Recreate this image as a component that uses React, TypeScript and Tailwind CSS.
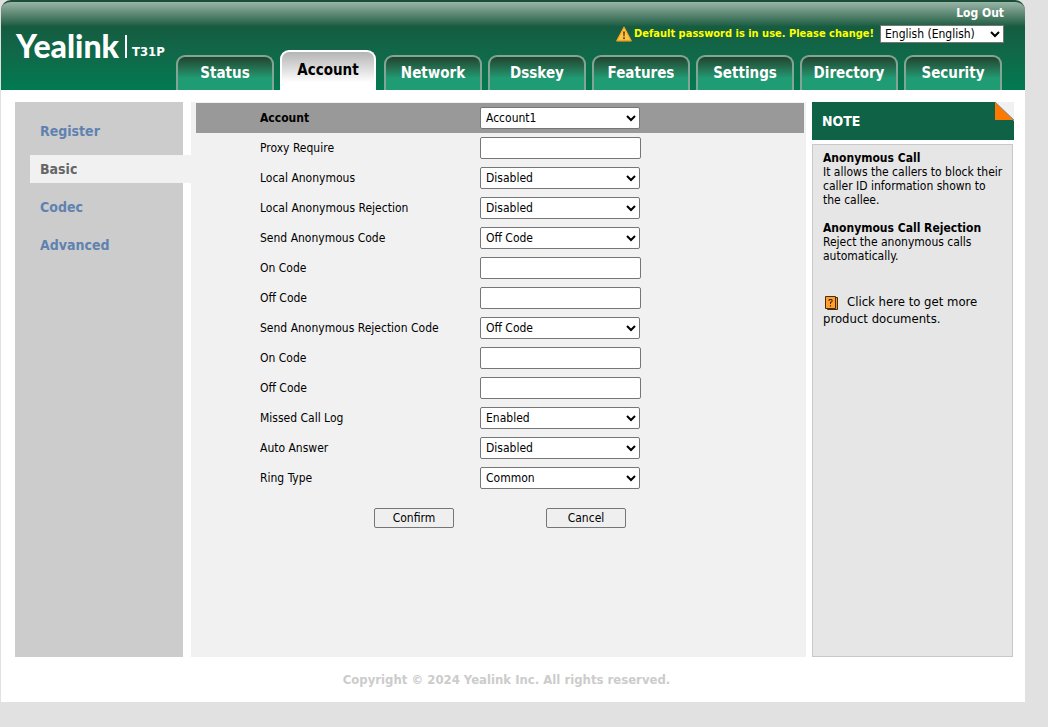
import { useState } from "react";
import type { ReactNode } from "react";

type Field = {
  id: string;
  label: string;
  // fields without options are plain text boxes
  options?: string[];
};

const tabs = ["Status", "Account", "Network", "Dsskey", "Features", "Settings", "Directory", "Security"];

const menu = ["Register", "Basic", "Codec", "Advanced"];

const fields: Field[] = [
  { id: "proxy-require", label: "Proxy Require" },
  { id: "local-anonymous", label: "Local Anonymous", options: ["Disabled", "Enabled"] },
  { id: "local-anonymous-rejection", label: "Local Anonymous Rejection", options: ["Disabled", "Enabled"] },
  { id: "send-anonymous-code", label: "Send Anonymous Code", options: ["Off Code", "On Code"] },
  { id: "anonymous-on-code", label: "On Code" },
  { id: "anonymous-off-code", label: "Off Code" },
  { id: "send-rejection-code", label: "Send Anonymous Rejection Code", options: ["Off Code", "On Code"] },
  { id: "rejection-on-code", label: "On Code" },
  { id: "rejection-off-code", label: "Off Code" },
  { id: "missed-call-log", label: "Missed Call Log", options: ["Enabled", "Disabled"] },
  { id: "auto-answer", label: "Auto Answer", options: ["Disabled", "Enabled"] },
  { id: "ring-type", label: "Ring Type", options: ["Common", "Ring1.wav", "Ring2.wav"] },
];

function WarningIcon() {
  return (
    <svg className="h-4 w-4 shrink-0" viewBox="0 0 16 16" aria-hidden="true">
      <path d="M8 1.2 15.2 14.8H.8z" fill="#fdb827" stroke="#f6a623" strokeWidth="1.2" strokeLinejoin="round" />
      <path d="M8 2.6 13.9 13.8H2.1z" fill="#fcc64b" />
      <path d="M7.1 5.5h1.8l-.3 5H7.4z" fill="#6b3c0c" />
      <rect x="7.1" y="11.4" width="1.8" height="1.7" fill="#6b3c0c" />
    </svg>
  );
}

function DocumentIcon() {
  return (
    <svg className="mr-2 inline-block h-4 w-4 align-middle" viewBox="0 0 16 16" aria-hidden="true">
      <path d="M4.500 2.500h10v12h-10z" fill="#f7941d" stroke="#4a2c0a" />
      <path d="M2.500 1.500h10v12h-10z" fill="#ff9f2e" stroke="#4a2c0a" />
      <path d="M6 6V4.500h3V7H7.500v2M7.500 10v1.500" fill="none" stroke="#4a2c0a" />
    </svg>
  );
}

function FoldedCorner() {
  return (
    <svg className="h-[19px] w-[19px] self-start" viewBox="0 0 19 19" aria-hidden="true">
      <path d="M0 0h19v19z" fill="#f1f1f1" />
      <path d="M0 0v18h18z" fill="#ff7800" />
      <path d="M0 0l19 18" stroke="#8a8680" />
    </svg>
  );
}

function Row({ id, label, header, children }: { id: string; label: string; header?: boolean; children: ReactNode }) {
  return (
    <div className={`flex h-[30px] items-center pl-16 ${header ? "bg-[#999999] font-bold" : ""}`}>
      <label htmlFor={id} className="w-[220px] shrink-0">
        {label}
      </label>
      {children}
    </div>
  );
}

function Select({ id, options }: { id: string; options: string[] }) {
  return (
    <select
      id={id}
      className="h-[22px] w-40 rounded-[2px] border border-[#767676] bg-white pl-px font-normal text-black"
    >
      {options.map((option) => (
        <option key={option}>{option}</option>
      ))}
    </select>
  );
}

function Header({ active, onSelect }: { active: string; onSelect: (tab: string) => void }) {
  return (
    <header className="flex h-[90px] justify-between rounded-t-[10px] border-t-2 border-[#1b4f39] bg-linear-to-b from-[#9ab5a8] via-[#155c41] via-28% to-[#007a52] pl-[15px] text-white">
      <div className="flex items-center">
        <span className="font-['Lato'] text-[32px] leading-8 font-black">Yealink</span>
        <span className="ml-[6px] h-[23px] w-0.5 bg-white" />
        <span className="mt-3 ml-[5px] text-[13px] font-bold">T31P</span>
      </div>

      <div className="flex flex-col items-end justify-between">
        <div className="flex flex-col items-end pt-[3px] pr-[21px] font-bold">
          <a href="#logout" className="leading-4">
            Log Out
          </a>
          <div className="mt-1 flex items-center">
            <WarningIcon />
            <a href="#password" className="ml-0.5 text-[11px] leading-4 text-[#ffff00]">
              Default password is in use. Please change!
            </a>
            <select
              aria-label="Language"
              className="ml-[6px] h-[18px] w-[124px] border border-[#767676] bg-white font-normal text-black"
            >
              <option>English (English)</option>
            </select>
          </div>
        </div>

        <nav className="flex items-end gap-[6px] pr-[23px] text-[15px] font-bold">
          {tabs.map((tab) => (
            <button
              key={tab}
              type="button"
              onClick={() => onSelect(tab)}
              className={
                tab === active
                  ? "mr-0.5 h-10 w-24 rounded-t-[9px] border-x-2 border-t-2 border-white bg-linear-to-b from-[#b5b5b5] to-white to-80% text-black"
                  : "h-[35px] w-[98px] rounded-t-[9px] border-x-2 border-t-2 border-[#84a596] bg-linear-to-b from-[#20442f] to-[#1f9c74] to-65%"
              }
            >
              {tab}
            </button>
          ))}
        </nav>
      </div>
    </header>
  );
}

function Sidebar({ active, onSelect }: { active: string; onSelect: (item: string) => void }) {
  return (
    <aside className="mr-2 w-[168px] shrink-0 bg-[#cccccc] pt-[15px] pl-[15px]">
      <ul className="flex flex-col gap-[10px] text-sm font-bold">
        {menu.map((item) => (
          <li key={item} className={item === active ? "-mr-2 bg-[#f1f1f1] text-[#666666]" : "text-[#5f82b0]"}>
            <a
              href={`#${item.toLowerCase()}`}
              onClick={() => onSelect(item)}
              className="flex h-7 items-center pl-[10px]"
            >
              {item}
            </a>
          </li>
        ))}
      </ul>
    </aside>
  );
}

function Note() {
  return (
    <aside className="flex w-[202px] shrink-0 flex-col">
      <div className="flex h-[38px] items-center justify-between bg-[#0f6245] pl-[10px] text-sm font-bold text-white">
        <h2>NOTE</h2>
        <FoldedCorner />
      </div>
      <div className="mt-1 mr-px flex-1 border border-[#c8c8c8] bg-[#e6e6e6] pt-[6px] pl-[10px] leading-[14px]">
        <h3 className="font-bold">Anonymous Call</h3>
        <p>
          It allows the callers to block their
          <br />
          caller ID information shown to
          <br />
          the callee.
        </p>
        <h3 className="mt-[14px] font-bold">Anonymous Call Rejection</h3>
        <p>
          Reject the anonymous calls
          <br />
          automatically.
        </p>
        <a href="#documents" className="mt-[31px] block pr-[10px] text-[13px] leading-4">
          <DocumentIcon />
          Click here to get more product documents.
        </a>
      </div>
    </aside>
  );
}

export default function App() {
  const [tab, setTab] = useState("Account");
  const [item, setItem] = useState("Basic");

  return (
    <div className="flex min-h-screen flex-col bg-[#e1e1e1] pr-[23px] pb-[25px] pl-px font-['DejaVu_Sans_Condensed','Noto_Sans',sans-serif] text-xs text-black">
      <Header active={tab} onSelect={setTab} />

      <div className="flex flex-1 flex-col bg-white pt-3 pr-[11px] pl-[14px]">
        <div className="flex flex-1">
          <Sidebar active={item} onSelect={setItem} />

          <main className="mr-[6px] flex-1 bg-[#f1f1f1] pt-px pr-0.5 pl-[5px]">
            <form onSubmit={(e) => e.preventDefault()}>
              <Row id="account" label="Account" header>
                <Select id="account" options={["Account1", "Account2"]} />
              </Row>
              {fields.map((field) => (
                <Row key={field.id} id={field.id} label={field.label}>
                  {field.options ? (
                    <Select id={field.id} options={field.options} />
                  ) : (
                    <input
                      id={field.id}
                      type="text"
                      className="h-[22px] w-[161px] rounded-[2px] border border-[#767676] bg-white px-1"
                    />
                  )}
                </Row>
              ))}

              <div className="mt-[15px] flex gap-[92px] pl-[178px]">
                <button type="submit" className="h-5 w-20 rounded-[2px] border border-[#767676] bg-[#efefef]">
                  Confirm
                </button>
                <button type="reset" className="h-5 w-20 rounded-[2px] border border-[#767676] bg-[#efefef]">
                  Cancel
                </button>
              </div>
            </form>
          </main>

          <Note />
        </div>

        <footer className="flex h-[45px] items-center justify-center pr-4 text-[13px] text-[#cccccc]">
          <p className="font-bold">Copyright © 2024 Yealink Inc. All rights reserved.</p>
        </footer>
      </div>
    </div>
  );
}
